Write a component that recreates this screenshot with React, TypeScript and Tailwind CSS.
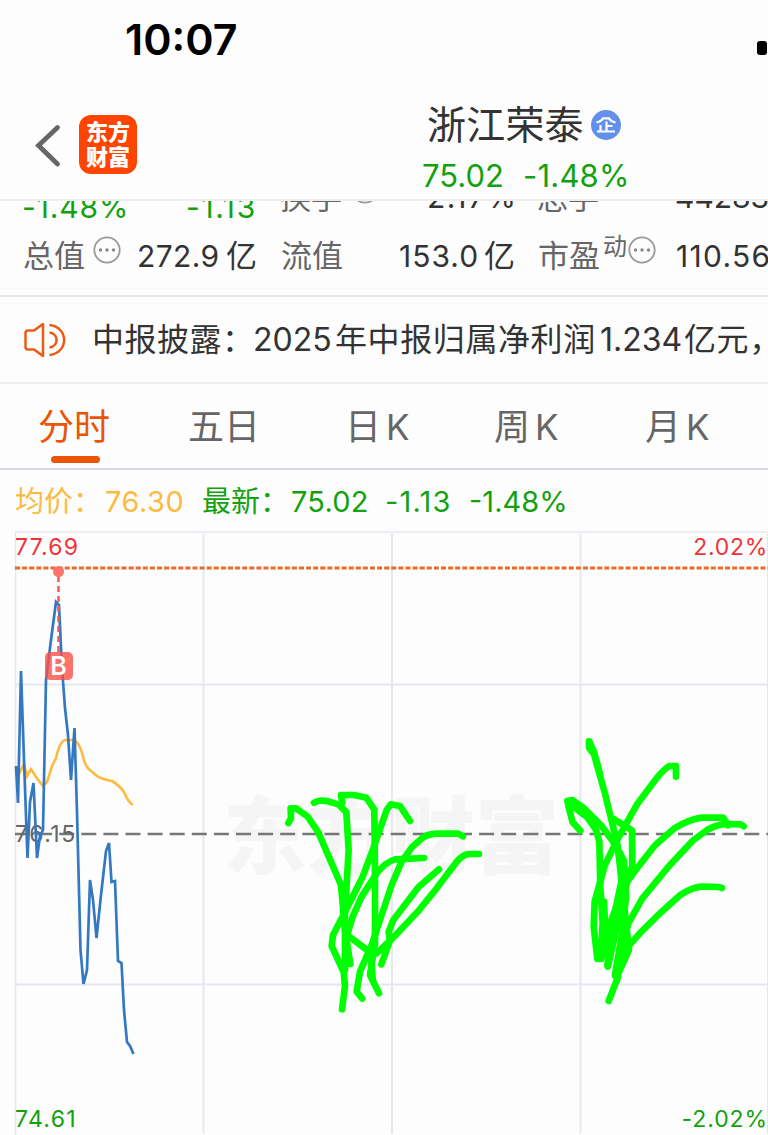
import { ReactNode } from 'react';
import clsx from 'clsx';

const tabs = [
  { label: '分时', suffix: '', width: 'w-[150px]' },
  { label: '五日', suffix: '', width: 'w-[157px]' },
  { label: '日', suffix: 'K', width: 'w-[149px]' },
  { label: '周', suffix: 'K', width: 'w-[151px]' },
  { label: '月', suffix: 'K', width: 'w-[120px]' },
];

const priceLine =
  '16,766 18,803 21,671 24,760 27.5,858 30,802 33.5,783 37,858 40,836 43,830 46,680 51,640 56,602 59,605 62,668 65,708 68,735 71,780 74.5,728 77,812 80.5,950 83.5,984 87,970 90,880 93,900 96.500,938 101,895 106,851 109,843 111.500,882 115,881 118,961 121.500,963 124,1010 127,1042 130,1046 133.500,1054';

const averageLine =
  'M16 770 L19 774 L24 764 L27 776 L31 769 L36 777 L43 786 L47 782 L52 766 L56 758 Q60 740 66 740 L74 740 Q79 742 82 753 Q85 767 90 770 L97 776 Q101 779 112 781 Q119 785 124 792 Q128 802 133 805';

function Num({ className, children }: { className?: string; children: ReactNode }) {
  return (
    <span className={clsx('shrink-0 whitespace-nowrap', className)}>{children}</span>
  );
}

function MoreIcon({ className }: { className?: string }) {
  return (
    <svg viewBox="0 0 28 28" className={clsx('size-7 shrink-0', className)}>
      <circle cx="14" cy="14" r="12.700" fill="none" stroke="#999" strokeWidth="1.800" />
      <g fill="#888">
        <circle cx="7.500" cy="14" r="1.700" />
        <circle cx="14" cy="14" r="1.700" />
        <circle cx="20.500" cy="14" r="1.700" />
      </g>
    </svg>
  );
}

function Header() {
  return (
    <header className="h-[201px] border-b-2 border-[#eeeeef]">
      <div className="flex h-20 items-start justify-between pt-[13px] pl-[125px]">
        <span className="text-[43px] leading-[52px] font-semibold text-black">10:07</span>
        <span className="mt-7 mr-px h-[14px] w-[10px] rounded-[3px] bg-black" />
      </div>
      <div className="flex">
        <svg viewBox="0 0 28 48" className="mt-[41px] ml-[34px] h-12 w-7">
          <path d="M23.500 6.500 L4.500 24.500 L23.500 43" fill="none" stroke="#666" strokeWidth="4.800" strokeLinecap="round" />
        </svg>
        <div className="mt-[35px] ml-[17px] flex h-[59px] w-[58px] flex-col items-center rounded-xl bg-[#ff4400] pt-[5px] text-[22px] leading-[25px] font-black text-white">
          <span>东方</span>
          <span>财富</span>
        </div>
        <div className="ml-[285px]">
          <div className="mt-5 flex h-[50px] items-center pl-[5px] text-[#333]">
            <span className="w-[164px] text-[39px] leading-[50px] tracking-[0.2px] whitespace-nowrap">浙江荣泰</span>
            <svg viewBox="0 0 30 30" className="size-[30px]">
              <circle cx="15" cy="15" r="15" fill="#6290ea" />
              <path
                d="M5.500 12.500 Q10.500 11.500 12 8.300 H18 Q19.500 11.500 24.500 12.500 M15.500 11.500 V21 M15.500 16 H21.500 M9.500 15 V21 M6 21.500 H24"
                fill="none"
                stroke="#fff"
                strokeWidth="2.200"
              />
            </svg>
          </div>
          <div className="flex h-[44px] pt-1 text-[31px] leading-[40px] text-[#13a10e]">
            <Num className="w-[101px] pt-[2px]">75.02</Num>
            <Num className="pt-[2px] tracking-[0.2px]">-1.48%</Num>
          </div>
        </div>
      </div>
    </header>
  );
}

function Stats() {
  return (
    <section className="h-[96px] overflow-hidden border-b-2 border-[#e6e7ec] text-[30px] text-[#333]">
      <div className="flex h-[33px] items-start overflow-hidden">
        <Num className="-mt-[14px] ml-[22px] w-[164px] leading-[40px] tracking-[0.9px] text-[#13a10e]">-1.48%</Num>
        <Num className="-mt-[14px] w-[94px] leading-[40px] tracking-[1.600px] text-[#13a10e]">-1.13</Num>
        <Num className="-mt-[23px] w-[72px] text-[31px] leading-[40px] text-[#666]">换手</Num>
        <MoreIcon className="-mt-[25px] mr-[48px] -ml-px" />
        <Num className="-mt-[24px] w-[110px] leading-[40px] tracking-[1.500px]">2.17%</Num>
        <Num className="-mt-[23px] w-[138px] text-[31px] leading-[40px] text-[#666]">总手</Num>
        <Num className="-mt-[24px] leading-[40px]">44283</Num>
      </div>
      <div className="flex h-[44px] items-center">
        <Num className="ml-[23px] w-[70px] text-[31px] text-[#666]">总值</Num>
        <MoreIcon className="mr-[16px] mb-[12px]" />
        <Num className="w-[89px] tracking-[0.4px]">272.9</Num>
        <Num className="w-[55px] text-[31px]">亿</Num>
        <Num className="w-[118px] text-[31px] text-[#666]">流值</Num>
        <Num className="w-[85px] tracking-[1px]">153.0</Num>
        <Num className="w-[54px] text-[31px]">亿</Num>
        <Num className="w-[65px] text-[31px] text-[#666]">市盈</Num>
        <Num className="mb-[18px] w-[25px] text-[24px] text-[#666]">动</Num>
        <MoreIcon className="mr-[20px] mb-[12px]" />
        <Num className="tracking-[1.300px]">110.56</Num>
      </div>
    </section>
  );
}

function News() {
  return (
    <section className="flex h-[87px] items-center overflow-hidden border-b-2 border-[#eeeeef] text-[32px] text-[#333]">
      <svg viewBox="0 0 44 36" className="ml-[23px] h-9 w-11 shrink-0" fill="none" stroke="#ee5a14" strokeWidth="2.500" strokeLinejoin="round">
        <path d="M20 2 V34 L11 27.500 H5 Q2.500 27.500 2.500 25 V11 Q2.500 8.500 5 8.500 H11 Z" />
        <path d="M26.500 3 C46 5 46 31 26.500 33 M26.500 10.500 C36 12 36 24 26.500 25.500" />
      </svg>
      <Num className="ml-[25px] w-[161px] tracking-[0.500px]">中报披露：</Num>
      <Num className="w-[82px]">2025</Num>
      <Num className="w-[265px] tracking-[0.600px]">年中报归属净利润</Num>
      <Num className="w-[84px]">1.234</Num>
      <Num className="tracking-[0.600px]">亿元，</Num>
    </section>
  );
}

function Tabs() {
  return (
    <nav className="flex h-[86px] border-b-2 border-[#d9dbe2] pl-[38px] text-[36px] text-[#666]">
      {tabs.map((tab, index) => (
        <div key={tab.label} className={clsx('shrink-0', tab.width, index === 0 && 'text-[#ea5504]')}>
          <div className="flex h-[72px] items-center pt-[14px]">
            <span className="mr-[5px]">{tab.label}</span>
            <span className="text-[35px]">{tab.suffix}</span>
          </div>
          {index === 0 && <div className="ml-[13px] h-[7px] w-[49px] rounded-full bg-[#ea5504]" />}
        </div>
      ))}
    </nav>
  );
}

function Legend() {
  return (
    <div className="flex h-[61px] items-center pt-[2px] pl-[15px] text-[29px] text-[#13a10e]">
      <Num className="w-[90px] text-[#fcbb40]">均价：</Num>
      <Num className="w-[97px] tracking-[0.500px] text-[#fcbb40]">76.30</Num>
      <Num className="w-[89px]">最新：</Num>
      <Num className="w-[94px] tracking-[0.2px]">75.02</Num>
      <Num className="w-[84px] tracking-[1.2px]">-1.13</Num>
      <Num>-1.48%</Num>
    </div>
  );
}

function Chart() {
  return (
    <svg viewBox="0 531 768 604" className="block h-[604px] w-[768px]" fill="none">
      <text x="223" y="867" fontSize="84" fontWeight="900" fill="#f5f5f5">
        东方财富
      </text>
      <g stroke="#e6e7ef" strokeWidth="2">
        <path d="M15 532 H768 M15.500 532 V1135" strokeWidth="1.500" />
        <path d="M203.500 534 V1134 M392 534 V1134 M580.500 534 V1134 M15 684.500 H768 M15 984.500 H768" />
        <path d="M767.500 534 V1134" strokeWidth="1" />
      </g>
      <path d="M15 568 H768" stroke="#ee6a26" strokeWidth="3" strokeDasharray="5 2.100" />
      <path d="M15 834 H768" stroke="#777" strokeWidth="2.700" strokeDasharray="15 7.100" />

      <text x="15" y="842" fontSize="23" letterSpacing="1.5" fill="#666">76.15</text>
      <path d={averageLine} stroke="#fcbb40" strokeWidth="2.600" />
      <polyline points={priceLine} stroke="#3478c2" strokeWidth="2.700" />
      <path d="M58.500 576 V652" stroke="#f65b50" strokeWidth="2.500" strokeDasharray="6 4" />
      <circle cx="58.500" cy="571.500" r="5.500" fill="#ff7468" />
      <rect x="45" y="652" width="28" height="28" rx="5" fill="#fa5046" fillOpacity="0.800" />
      <text x="58.500" y="675" fontSize="25" fontWeight="600" textAnchor="middle" fill="#fff">B</text>

      <text x="15" y="555" fontSize="23" letterSpacing="1.2" fill="#f33238">77.69</text>
      <text x="768" y="555" fontSize="23" letterSpacing="0.700" textAnchor="end" fill="#f33238">2.02%</text>
      <text x="15" y="1127" fontSize="23" letterSpacing="1.3" fill="#13a10e">74.61</text>
      <text x="768" y="1127" fontSize="23" letterSpacing="0.900" textAnchor="end" fill="#13a10e">-2.02%</text>

      <g stroke="#00ff00" strokeWidth="20" strokeLinecap="round" strokeLinejoin="round">
        <g transform="translate(210 770) scale(0.3333)">
          <path d="M235 159 L243 145 L242 115 L258 115 L293 140 L325 187 L393 345 L405 480 L421 582" />
          <path d="M312 98 Q325 89 350 93 L385 103 L409 126 L416 240 L405 430 L405 600" />
          <path d="M397 98 L393 75 L432 75 L469 83 L493 119 L495 300 L495 520 L480 615 L507 670" />
          <path d="M600 153 L570 108 L543 103 L530 120 L490 235 L458 320 L408 420 L369 495 L365 528 L401 606 L405 648 L396 718" />
          <path d="M642 264 L555 268 Q525 277 500 310 L455 380 L428 440 L410 500 L410 580" />
          <path d="M759 199 L745 191 L680 191 Q652 193 637 204 L607 230 L575 275 L545 345 L510 450 L485 525 L450 605 L440 665 L457 686" />
          <path d="M807 252 L775 252 Q757 256 742 273 L680 355 L625 423 L560 492 L500 550 L475 543 L418 500" />
          <path d="M687 298 L625 352 L550 450 L536 485 L540 512 L514 583" />
          <path d="M493 510 L484 570 L488 625" />
        </g>
        <g transform="translate(540 720) scale(0.3333)">
          <path d="M147 64 L147 83 L162 103 L194 217 L232 372 L245 480 L222 590 L202 665" />
          <path d="M148 65 L162 95 L180 162" />
          <path d="M408 170 L408 138 L388 138 Q372 148 352 172 L292 252 L230 363 L194 437 L164 545 L161 620 L172 717 L184 717 L207 620 L245 520" />
          <path d="M121 332 L98 307 L87 265 L82 243 L97 240 L130 263 L184 317 L218 363 L252 422 L258 530 L248 630 L225 765" />
          <path d="M92 254 L142 292 L168 330 L178 365 L181 500 L188 610 L182 705" />
          <path d="M95 247 L135 277 L165 312" />
          <path d="M184 545 L192 545 L197 655" />
          <path d="M564 316 L550 293 L485 293 Q445 299 402 326 L345 376 L295 440 L262 485 L237 590 L204 740" />
          <path d="M611 319 L602 313 L552 312 Q525 316 503 329 L458 362 L390 435 L307 535 L265 610 L228 755" />
          <path d="M546 504 Q537 499 485 500 Q455 502 420 526 L365 575 L305 634 L264 680 L228 770" />
          <path d="M223 298 L276 331 L277 438 L245 520 L207 620 L200 700" />
          <path d="M240 400 L247 540 L218 640 L202 735" />
          <path d="M253 560 L267 690 L235 760 L233 774 L206 843" />
        </g>
      </g>
    </svg>
  );
}

export default function App() {
  return (
    <main className="h-[1135px] w-[768px] overflow-hidden bg-[#fdfdfe] font-[Inter,'Noto_Sans_CJK_SC',sans-serif]">
      <Header />
      <Stats />
      <News />
      <Tabs />
      <Legend />
      <Chart />
    </main>
  );
}
